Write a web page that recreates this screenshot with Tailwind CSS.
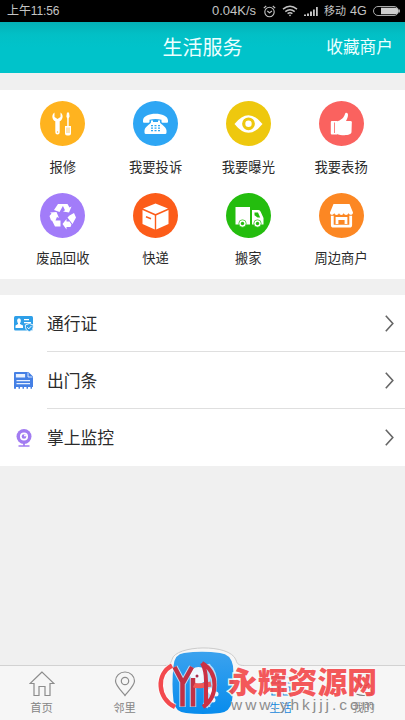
<!DOCTYPE html>
<html lang="zh-CN">
<head>
<meta charset="utf-8">
<meta name="viewport" content="width=device-width, initial-scale=1">
<title>生活服务</title>
<script src="https://cdn.jsdelivr.net/npm/@tailwindcss/browser@4"></script>
</head>
<body class="w-[405px] h-[720px] overflow-hidden bg-[#f0f0f0] font-['Roboto','Noto_Sans_CJK_SC',sans-serif] text-[#2b2b2b]">
<div class="relative flex flex-col w-full h-full">
  <div class="flex items-center h-[22px] shrink-0 bg-black pl-[7px] pr-[7px] text-[#c4c4c4] text-[12px] leading-[22px] whitespace-nowrap">
    <span class="font-['Liberation_Sans','Noto_Sans_CJK_SC',sans-serif] text-[12px] tracking-[-0.1px]">上午11:56</span>
    <div class="flex items-center ml-auto">
      <span class="font-['Liberation_Sans',sans-serif] text-[13px] w-[45px]">0.04K/s</span>
      <svg class="ml-[6px]" width="13" height="13" viewBox="0 0 13 13" fill="none" stroke="#c4c4c4" stroke-width="1.1"><circle cx="6.5" cy="7" r="4.7"/><path d="M.8 3.2 3.2 1M12.2 3.2 9.8 1M4.3 6l2.200 1.700L9 6"/></svg>
      <svg class="ml-[6px]" width="16" height="12" viewBox="0 0 16 12" fill="none" stroke="#c4c4c4" stroke-width="1.500"><path d="M1 4.200Q8-1.600 15 4.200M3.300 6.600q4.700-3.800 9.400 0M5.600 8.700q2.400-1.900 4.800 0"/><circle cx="8" cy="10.400" r=".8" fill="#c4c4c4" stroke="none"/></svg>
      <svg class="ml-[6px]" width="14" height="11" viewBox="0 0 14 11" fill="#c4c4c4"><path d="M0 8.500h2v1.500H0zM3 7.500h2V10H3zM6 5.500h2V10H6zM9 3.500h1.800V10H9zM12 1h1.800v9H12z"/></svg>
      <span class="ml-[6px] text-[11px] w-[22px] relative top-[1px]">移动</span>
      <span class="ml-[4px] font-['Liberation_Sans',sans-serif] text-[12.500px] w-[17px]">4G</span>
      <svg class="ml-[6px] -mr-[3px]" width="28" height="10" viewBox="0 0 28 10"><rect x=".5" y=".5" width="25" height="9" rx="4.500" fill="none" stroke="#aaa"/><path d="M8 1.700h14a3.300 3.300 0 0 1 0 6.600H8z" fill="#cfcfcf"/><path d="M26.500 3.500v3" stroke="#aaa"/></svg>
    </div>
  </div>
  <header class="grid grid-cols-3 items-center h-[51px] shrink-0 bg-linear-to-b from-[#04b1b7] from-0% via-[#02c0c6] via-25% to-[#00c3ca] to-50% text-[#edffff] leading-none">
    <span></span>
    <h1 class="text-center text-[20px] leading-[50px]">生活服务</h1>
    <span class="text-right pr-[12px] pt-[1px] text-[16.700px] leading-[50px]">收藏商户</span>
  </header>

  <section class="mt-[17px] h-[189px] shrink-0 bg-white grid grid-cols-4 auto-rows-[92px] pl-[16.500px] pr-[17.500px] pt-[11px] text-[13.300px] leading-[20px] whitespace-nowrap">
    <div class="flex flex-col items-center">
      <svg width="45" height="45" viewBox="0 0 45 45"><circle cx="22.500" cy="22.500" r="22.500" fill="#ffb31f"/><path d="M14.500 11.500v4.500l3 2 3-2v-4.500c3.500 2.500 2.300 7.500-.8 8.800v11a2.200 2.200 0 0 1-4.400 0v-11c-3.200-1.300-4.300-6.300-.8-8.800z" fill="#fff"/><circle cx="17.500" cy="31" r=".7" fill="#ffb31f"/><path d="M27 11.500h2l.6 4-.9 2v7.500h2.300v7.500q0 2-2 2h-2q-2 0-2-2v-7.500h2.200v-7.500l-.8-2z" fill="#fff"/><path d="M27 26.500v5.500M29 26.500v5.500" stroke="#ffb31f" stroke-width=".7"/></svg>
      <span class="mt-[12px]">报修</span>
    </div>
    <div class="flex flex-col items-center">
      <svg width="45" height="45" viewBox="0 0 45 45"><circle cx="22.500" cy="22.500" r="22.500" fill="#2ea6f4"/><path d="M10 19.500c0-9 25-9 25 0v1.500q0 .8-1 .8h-4.500q-1 0-1-1v-2q-6-1.500-12 0v2q0 1-1 1H11q-1 0-1-.8z" fill="#fff"/><path d="M18 19.500h2v1.500h5v-1.500h2v2c1 2 6 4 6.500 8v2q0 1.500-1.500 1.500H13q-1.500 0-1.500-1.500v-2c.5-4 5.500-6 6.500-8z" fill="#fff"/><g fill="#2ea6f4"><path d="M18 24h2v1.300h-2zM21.500 24h2v1.300h-2zM25 24h2v1.300h-2zM18 26.500h2v1.300h-2zM21.500 26.500h2v1.300h-2zM25 26.500h2v1.300h-2zM18 29h2v1.300h-2zM21.500 29h2v1.300h-2zM25 29h2v1.300h-2z"/></g></svg>
      <span class="mt-[12px]">我要投诉</span>
    </div>
    <div class="flex flex-col items-center">
      <svg width="45" height="45" viewBox="0 0 45 45"><circle cx="22.500" cy="22.500" r="22.500" fill="#eec80e"/><path d="M8.500 23q14-17.500 28 0-14 17.500-28 0z" fill="#fff"/><circle cx="22.500" cy="22.800" r="4.800" fill="none" stroke="#eec80e" stroke-width="3.200"/></svg>
      <span class="mt-[12px]">我要曝光</span>
    </div>
    <div class="flex flex-col items-center">
      <svg width="45" height="45" viewBox="0 0 45 45"><circle cx="22.500" cy="22.500" r="22.500" fill="#fa625f"/><path d="M12.800 20H18v13.500h-5.200q-1 0-1-1V21q0-1 1-1z" fill="#fff"/><path d="M17.500 20.500c4.500-1 7.500-4 8.500-7.500.5-2 3-1.500 3 1 0 2-1 4-2 6h4.500c1.500 0 1.500 1.200 1.300 2l-.3 9c-.2 1.500-1 2-2 2.300-3 1.500-9 1-13-.3z" fill="#fff"/><path d="M15.500 21.500v10.500" stroke="#fa625f" stroke-width=".8"/></svg>
      <span class="mt-[12px]">我要表扬</span>
    </div>
    <div class="flex flex-col items-center">
      <svg width="45" height="45" viewBox="0 0 45 45"><circle cx="22.500" cy="22.500" r="22.500" fill="#a27cf9"/><g fill="#fff"><path d="m14 17 4-6h6l-4.500 8zM22 11h5.500l2 3.500 2-1-2.500 6-6-1 2-1.200zM29.500 22.500l4.500-2.500 2 4.500-3.500 6.500-5-6.500zM31.500 31.500l-1 2.500h-4v2.500L22.500 31l4-5v2.500h3zM20.500 27.500v6H15l-3-6zM11 27.500 9.500 23l2-2.500-1.500-1 6.500-.5 2.500 6-2-1-1.500 3.500z"/></g></svg>
      <span class="mt-[11px]">废品回收</span>
    </div>
    <div class="flex flex-col items-center">
      <svg width="45" height="45" viewBox="0 0 45 45"><circle cx="22.500" cy="22.500" r="22.500" fill="#fc5c19"/><path d="m22.500 10.500 12.500 5-12.500 5.500L10 15.500zM9.500 17l12.300 5.500v14L9.500 31zM35.500 17v14l-12.300 5.500v-14z" fill="#fff"/><path d="m13 23.700 5 2" stroke="#fc5c19" stroke-width="1.500"/></svg>
      <span class="mt-[11px]">快递</span>
    </div>
    <div class="flex flex-col items-center">
      <svg width="45" height="45" viewBox="0 0 45 45"><circle cx="22.500" cy="22.500" r="22.500" fill="#24bd0e"/><path d="M9.500 14H24v17.500H9.500zM26 17h6.500q1.500 0 2.300 2l2.700 6v6.500H26z" fill="#fff"/><path d="M28.500 19.500h3.500l2.200 5h-2.700l-3-2.200z" fill="#24bd0e"/><g fill="#fff" stroke="#24bd0e" stroke-width=".7"><circle cx="16.500" cy="30.500" r="3.700"/><circle cx="31.500" cy="30.500" r="3.700"/></g><g fill="#24bd0e"><circle cx="16.500" cy="30.500" r="1.700"/><circle cx="31.500" cy="30.500" r="1.700"/></g></svg>
      <span class="mt-[11px]">搬家</span>
    </div>
    <div class="flex flex-col items-center">
      <svg width="45" height="45" viewBox="0 0 45 45"><circle cx="22.500" cy="22.500" r="22.500" fill="#fc8723"/><path d="M14.500 11h16l3.500 8.500c0 3-4 3-4.500.5-.5 2.500-4.300 2.500-4.800 0-.5 2.500-4.200 2.500-4.700 0-.5 2.500-4.300 2.500-4.800 0-.5 2.500-4.500 2.500-4.200-.5z" fill="#fff"/><path d="M13.300 22.800V32q0 1.200 1.200 1.200h16q1.200 0 1.200-1.200v-9.200M18 31V25.500h9V31" fill="none" stroke="#fff" stroke-width="2.800"/></svg>
      <span class="mt-[11px]">周边商户</span>
    </div>
  </section>

  <section class="mt-[16px] h-[171px] shrink-0 bg-white text-[16.800px]">
    <div class="flex h-[57px]">
      <div class="w-[47px] pl-[14px] flex items-center"><svg width="20" height="16" viewBox="0 0 20 16"><rect x="0" y="0" width="19" height="14.500" rx="1.500" fill="#2e9fe8"/><ellipse cx="5" cy="4.800" rx="1.900" ry="2.600" fill="#fff"/><path d="M4 6h2v2l3 1.500V12H1.500V9.500L4 8zM10 3h5v1.300h-5zM10 6h7v1.300h-7z" fill="#fff"/><path d="m15.300 7.500 4 1.500c0 4-1 5.500-4 6.700-3-1.200-4-2.700-4-6.700z" fill="#2e9fe8" stroke="#fff" stroke-width=".9"/><path d="m13.300 11.300 1.500 1.500 2.700-2.900" fill="none" stroke="#fff"/></svg></div>
      <div class="flex flex-1 items-center justify-between pr-[11px] border-b border-[#dfdfdf]"><span class="leading-6 pt-[1px]">通行证</span><svg width="9" height="17" viewBox="0 0 9 17" fill="none" stroke="#666" stroke-width="1.600"><path d="m.8.700 7 7.800-7 7.800"/></svg></div>
    </div>
    <div class="flex h-[57px]">
      <div class="w-[47px] pl-[14px] flex items-center"><svg width="20" height="18" viewBox="0 0 20 18"><path d="M0 1q0-1 1-1h13.500L19 4.500V15h-1v1.700h-1.500V15H14v1.700h-1.500V15H10v1.700H8.500V15H6v1.700H4.500V15H2v1.700H0z" fill="#4580e5"/><path d="M2.500 2.500h8v2.500h-8zM2.500 8.700h13.500M2.500 11.700h13.500" fill="#e8f1ff" stroke="#e8f1ff" stroke-width="1.200"/><path d="M14 .5V5h4.500" fill="none" stroke="#fff" stroke-width=".8"/></svg></div>
      <div class="flex flex-1 items-center justify-between pr-[11px] border-b border-[#dfdfdf]"><span class="leading-6 pt-[1px]">出门条</span><svg width="9" height="17" viewBox="0 0 9 17" fill="none" stroke="#666" stroke-width="1.600"><path d="m.8.700 7 7.800-7 7.800"/></svg></div>
    </div>
    <div class="flex h-[57px]">
      <div class="w-[47px] pl-[16px] flex items-center"><svg width="16" height="18" viewBox="0 0 16 18"><circle cx="8" cy="7.500" r="7.500" fill="#a27cf1"/><circle cx="8" cy="7.500" r="3.200" fill="none" stroke="#fff" stroke-width="1.700"/><circle cx="9" cy="6.500" r="1" fill="#fff"/><path d="M8 14v3M2.500 17h11" stroke="#a27cf1" stroke-width="1.700"/></svg></div>
      <div class="flex flex-1 items-center justify-between pr-[11px]"><span class="leading-6 pt-[1px]">掌上监控</span><svg width="9" height="17" viewBox="0 0 9 17" fill="none" stroke="#666" stroke-width="1.600"><path d="m.8.700 7 7.800-7 7.800"/></svg></div>
    </div>
  </section>

  <nav class="mt-auto relative h-[55px] shrink-0 border-t border-[#d2d2d2] bg-[#f6f6f6] grid grid-cols-[83px_83px_73px_83px_83px] text-[11.300px] leading-[16px] text-[#858585]">
    <div class="flex flex-col items-center pt-[5px]"><svg width="26" height="26" viewBox="0 0 26 26" fill="none" stroke="#8c8c8c" stroke-width="1.200"><path d="M13 1 1 12.500h4V24.500h5v-9h6v9h5V12.500h4z"/></svg><span class="mt-[4px]">首页</span></div>
    <div class="flex flex-col items-center pt-[5px]"><svg width="26" height="26" viewBox="0 0 26 26" fill="none" stroke="#8c8c8c" stroke-width="1.200"><path d="M13 24.500C8 18.500 3.500 14 3.500 10a9.500 9 0 0 1 19 0c0 4-4.500 8.500-9.500 14.500z"/><circle cx="13" cy="10" r="3.700"/></svg><span class="mt-[4px]">邻里</span></div>
    <div></div>
    <div class="flex flex-col items-center pt-[5px] text-[#1687db]"><svg width="24" height="26" viewBox="0 0 24 26" fill="none" stroke="#1687db" stroke-width="1.200"><path d="M3 6h7v6H3zM14 6h7v6h-7zM3 16h7v8H3zM14 16h7v8h-7z"/></svg><span class="mt-[4px]">生活</span></div>
    <div class="flex flex-col items-center pt-[5px]"><svg width="26" height="26" viewBox="0 0 26 26" fill="none" stroke="#777" stroke-width="1.200"><circle cx="13" cy="9" r="6"/><path d="M5 23c-1-9 17-9 16 0q-8 3-16 0"/></svg><span class="mt-[4px]">我的</span></div>
  </nav>

  <svg class="absolute left-[155px] top-[640px]" width="95" height="80" viewBox="0 0 95 80">
    <path d="M10 25.500c5 0 6-3 7-6C20 5 75 3 81 20c1 4 3 5.500 8 5.500V80H10z" fill="#f6f6f6"/><path d="M10 25.500c5 0 6-3 7-6C20 5 75 3 81 20c1 4 3 5.500 8 5.500" fill="none" stroke="#ccc"/>
    <defs><linearGradient id="blueTile" x2="0" y2="1"><stop stop-color="#3ba2ee"/><stop offset="1" stop-color="#078ced"/></linearGradient></defs>
    <path d="M29 13q18-2.500 36 0 11 1 13 13 1.500 17-1 35-2 11-12 12-17 2-34 0-11-1-12.500-12-2-17 0-35 1-12 10.500-13z" fill="url(#blueTile)"/>
    <circle cx="43.500" cy="35.500" r="8.500" fill="#edf7ff"/><path d="m54 49 5 7" stroke="#ecf7ff" stroke-width="5"/><circle cx="61" cy="54" r="2.500" fill="#ecf7ff"/><circle cx="58" cy="60" r="2.500" fill="#ecf7ff"/>
    <g fill="none">
      <path d="M17 25.500C1 34 2 58 20 67M19.500 27l8 15v25M37 27l-9 16M38 38v29M52 24v43M52 26c10 8 9 30-2 40" stroke="#fff" stroke-opacity=".65" stroke-width="6.500"/>
      <path d="M17 25.500C1 34 2 58 20 67" stroke="#f34a4e" stroke-width="4.500"/>
      <path d="m19.500 27 8 15v24.500M37 27l-9 16M38 38v28.500" stroke="#c13145" stroke-width="4.500"/>
      <path d="M39 45q4 2 17-1" stroke="#f05a59" stroke-width="5"/>
      <path d="M47 23q4 7 4 18v25M47 23c17 10 16 34 1 44" stroke="#cb3044" stroke-width="4"/>
    </g>
    <path d="M37.500 36a5.500 5.500 0 0 1 10.500 0q-5 4-10.500 0z" fill="#f5f9ff"/><circle cx="42" cy="36" r="1.500" fill="#a62e50"/>
  </svg>
  <div class="absolute left-[228px] top-[661px] text-[29.800px] leading-[38px] font-black text-[#f3474a] opacity-90 font-['Noto_Sans_CJK_SC',sans-serif] whitespace-nowrap [-webkit-text-stroke:3px_#fafafa] [paint-order:stroke_fill]">永辉资源网</div>
  <div class="absolute left-[231px] top-[694.500px] text-[15.500px] leading-[20px] tracking-[2.950px] text-[#828282] opacity-90 font-['Liberation_Sans',sans-serif] whitespace-nowrap [-webkit-text-stroke:.5px_#fafafa] [paint-order:stroke_fill]">www.yhkjjj.com</div>
</div>
</body>
</html>
